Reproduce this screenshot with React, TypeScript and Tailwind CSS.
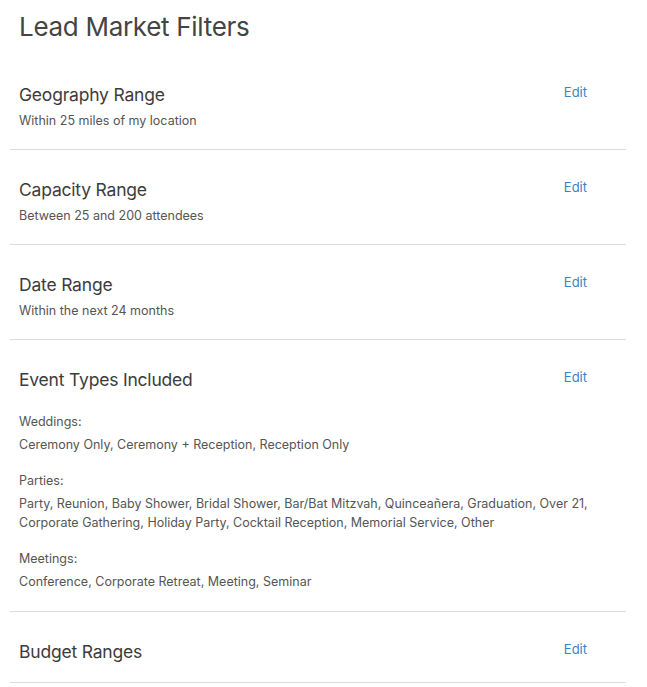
const font = { fontFamily: 'Inter, "Open Sans", sans-serif' };

function Section({ title, children }: { title: string; children?: React.ReactNode }) {
  return (
    <div className="border-b border-[#dcdcdc] px-[9px] pt-[29px] pb-[19px]">
      <div className="flex justify-between items-start">
        <h2 className="text-[17.5px] leading-[22px] text-[#3c3c3c] tracking-[-0.2px]">{title}</h2>
        <button className="text-[13px] leading-[20px] text-[#3b82c4] mr-[30px] -mt-[2px]">Edit</button>
      </div>
      {children}
    </div>
  );
}

export default function App() {
  return (
    <div className="bg-white w-[647px] h-[687px] overflow-hidden" style={font}>
      <h1 className="text-[26px] leading-[32px] text-[#444] px-[19px] pt-[11px] tracking-[-0.3px]">Lead Market Filters</h1>
      <div className="mx-[10px] w-[616px] mt-[12px]">
        <Section title="Geography Range">
          <p className="text-[12.5px] leading-[19px] text-[#555] mt-[5px]">Within 25 miles of my location</p>
        </Section>
        <Section title="Capacity Range">
          <p className="text-[12.5px] leading-[19px] text-[#555] mt-[5px]">Between 25 and 200 attendees</p>
        </Section>
        <Section title="Date Range">
          <p className="text-[12.5px] leading-[19px] text-[#555] mt-[5px]">Within the next 24 months</p>
        </Section>
        <Section title="Event Types Included">
          <div className="text-[12.5px] leading-[19px] text-[#555] mt-[21px] flex flex-col gap-[17px] pb-[1px]">
            <div>
              <p className="mb-[4px]">Weddings:</p>
              <p>Ceremony Only, Ceremony + Reception, Reception Only</p>
            </div>
            <div>
              <p className="mb-[4px]">Parties:</p>
              <p>Party, Reunion, Baby Shower, Bridal Shower, Bar/Bat Mitzvah, Quinceañera, Graduation, Over 21, Corporate Gathering, Holiday Party, Cocktail Reception, Memorial Service, Other</p>
            </div>
            <div>
              <p className="mb-[4px]">Meetings:</p>
              <p>Conference, Corporate Retreat, Meeting, Seminar</p>
            </div>
          </div>
        </Section>
        <Section title="Budget Ranges" />
      </div>
    </div>
  );
}
